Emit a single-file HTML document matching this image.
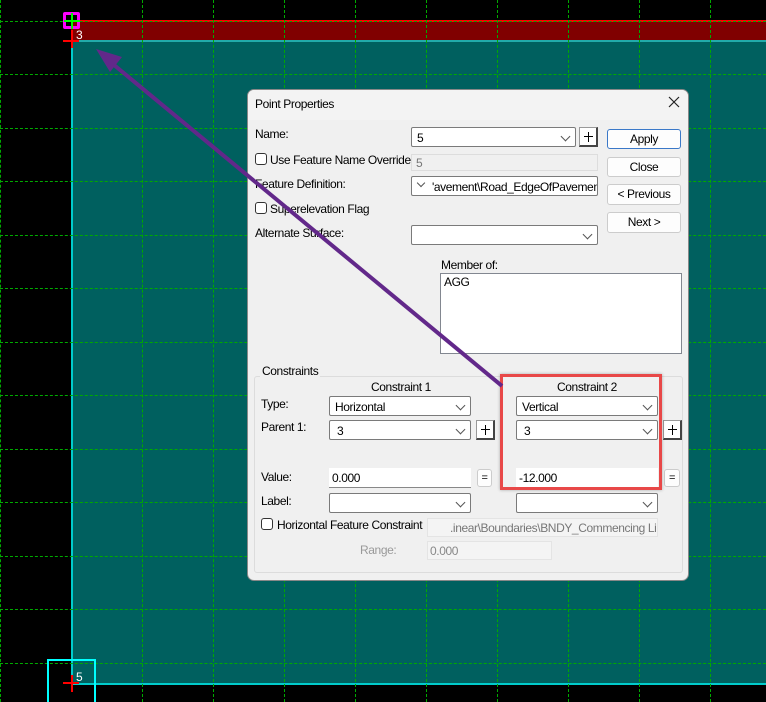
<!DOCTYPE html>
<html><head><style>
html,body{margin:0;width:766px;height:702px;overflow:hidden}
body{background:#000;position:relative;font-family:"Liberation Sans",sans-serif;font-size:12px;letter-spacing:-0.4px;color:#000}
.a{position:absolute;white-space:nowrap}
.vl{position:absolute;top:0;height:702px;width:0;border-left:1px dashed #0a0}
.hl{position:absolute;left:0;width:766px;height:0;border-top:1px dashed #0a0}
.cb{position:absolute;background:#fff;border:1px solid #7a7a7a;box-sizing:border-box;border-radius:2px;overflow:hidden;white-space:nowrap}
.cb .t{position:absolute;left:5px;top:3px}
.cb .v{position:absolute;right:6px;top:5px;width:6px;height:6px;border-right:1px solid #555;border-bottom:1px solid #555;transform:rotate(45deg)}
.btn{position:absolute;background:#fdfdfd;border:1px solid #ccc;border-radius:3px;box-sizing:border-box;text-align:center}
.pk{position:absolute;background:#fff;border:1px solid #999;border-right:2px solid #444;border-bottom:2px solid #444;box-sizing:border-box}
.pk:before{content:"";position:absolute;left:8px;top:4px;width:1px;height:10px;background:#000}
.pk:after{content:"";position:absolute;left:4px;top:8px;width:9px;height:1px;background:#000}
.chk{position:absolute;width:12px;height:12px;border:1px solid #333;border-radius:3px;box-sizing:border-box;background:#fff}
</style></head><body>
<div class="a" style="left:71px;top:20px;width:695px;height:20px;background:#800000;border-top:2px solid #f00;box-sizing:border-box"></div>
<div class="a" style="left:71px;top:40px;width:695px;height:645px;background:#00605f;border-left:2px solid #0cc;border-top:2px solid #2aa;border-bottom:2px solid #0cc;box-sizing:border-box"></div>
<div class="vl" style="left:0"></div><div class="vl" style="left:142px"></div><div class="vl" style="left:213px"></div><div class="vl" style="left:284px"></div><div class="vl" style="left:355px"></div><div class="vl" style="left:426px"></div><div class="vl" style="left:497px"></div><div class="vl" style="left:568px"></div><div class="vl" style="left:639px"></div><div class="vl" style="left:710px"></div>
<div class="hl" style="top:21px"></div><div class="hl" style="top:74px"></div><div class="hl" style="top:128px"></div><div class="hl" style="top:181px"></div><div class="hl" style="top:235px"></div><div class="hl" style="top:288px"></div><div class="hl" style="top:342px"></div><div class="hl" style="top:395px"></div><div class="hl" style="top:449px"></div><div class="hl" style="top:502px"></div><div class="hl" style="top:556px"></div><div class="hl" style="top:609px"></div><div class="hl" style="top:663px"></div>
<div class="a" style="left:63px;top:12px;width:17px;height:17px;border:3px solid #f0f;border-radius:2px;box-sizing:border-box"></div>
<div class="a" style="left:71px;top:13px;width:2px;height:16px;background:#0f0"></div>
<div class="a" style="left:64px;top:20px;width:16px;height:2px;background:#0f0"></div>
<div class="a" style="left:63px;top:40px;width:16px;height:2px;background:#f00"></div>
<div class="a" style="left:71px;top:30px;width:2px;height:18px;background:#f00"></div>
<div class="a" style="left:76px;top:28px;color:#fff;font-size:12px">3</div>
<div class="a" style="left:47px;top:659px;width:49px;height:50px;border:2px solid #0ff;box-sizing:border-box"></div>
<div class="a" style="left:63px;top:682px;width:16px;height:2px;background:#f00"></div>
<div class="a" style="left:71px;top:675px;width:2px;height:17px;background:#f00"></div>
<div class="a" style="left:76px;top:670px;color:#fff;font-size:12px">5</div>

<div class="a" style="left:247px;top:89px;width:442px;height:492px;background:#f0f0f0;border-radius:7px;border:1px solid #888;box-sizing:border-box;overflow:hidden">
<div class="a" style="left:0;top:0;width:442px;height:30px;background:#f3f3f3"></div>
</div>
<div class="a" style="left:255px;top:97px;font-size:12px">Point Properties</div>
<svg class="a" style="left:668px;top:96px" width="12" height="12"><path d="M1 1L11 11M11 1L1 11" stroke="#222" stroke-width="1.2"/></svg>

<div class="a" style="left:255px;top:127px">Name:</div>
<div class="cb" style="left:411px;top:127px;width:165px;height:20px"><span class="t">5</span><span class="v"></span></div>
<div class="pk" style="left:579px;top:127px;width:19px;height:20px"></div>
<div class="btn" style="left:607px;top:129px;width:74px;height:20px;border:1px solid #3a78c8;line-height:18px">Apply</div>
<div class="btn" style="left:607px;top:157px;width:74px;height:20px;line-height:18px">Close</div>
<div class="btn" style="left:607px;top:184px;width:74px;height:21px;line-height:19px">&lt; Previous</div>
<div class="btn" style="left:607px;top:212px;width:74px;height:21px;line-height:19px">Next &gt;</div>

<div class="chk" style="left:255px;top:153px"></div><div class="a" style="left:270px;top:153px">Use Feature Name Override:</div>
<div class="a" style="left:411px;top:154px;width:187px;height:17px;background:#f0f0f0;border:1px solid #ddd;box-sizing:border-box;color:#777;padding:1px 4px">5</div>
<div class="a" style="left:255px;top:177px">Feature Definition:</div>
<div class="cb" style="left:411px;top:176px;width:187px;height:20px"><span class="a" style="left:6px;top:3px;width:5px;height:5px;border-right:1px solid #555;border-bottom:1px solid #555;transform:rotate(45deg)"></span><span class="t" style="left:20px">'avement\Road_EdgeOfPavement</span></div>
<div class="chk" style="left:255px;top:202px"></div><div class="a" style="left:270px;top:202px">Superelevation Flag</div>
<div class="a" style="left:255px;top:226px">Alternate Surface:</div>
<div class="cb" style="left:411px;top:225px;width:187px;height:20px"><span class="v"></span></div>

<div class="a" style="left:441px;top:258px">Member of:</div>
<div class="a" style="left:440px;top:273px;width:242px;height:81px;background:#fff;border:1px solid #828790;box-sizing:border-box;padding:1px 3px">AGG</div>

<div class="a" style="left:254px;top:376px;width:429px;height:197px;border:1px solid #dcdcdc;border-radius:3px;box-sizing:border-box"></div>
<div class="a" style="left:260px;top:364px;background:#f0f0f0;padding:0 2px">Constraints</div>
<div class="a" style="left:371px;top:380px">Constraint 1</div>
<div class="a" style="left:557px;top:380px">Constraint 2</div>
<div class="a" style="left:261px;top:397px">Type:</div>
<div class="cb" style="left:329px;top:396px;width:142px;height:20px"><span class="t">Horizontal</span><span class="v"></span></div>
<div class="cb" style="left:516px;top:396px;width:142px;height:20px"><span class="t">Vertical</span><span class="v"></span></div>
<div class="a" style="left:261px;top:420px">Parent 1:</div>
<div class="cb" style="left:329px;top:420px;width:142px;height:20px"><span class="t" style="left:7px">3</span><span class="v"></span></div>
<div class="cb" style="left:516px;top:420px;width:142px;height:20px"><span class="t" style="left:7px">3</span><span class="v"></span></div>
<div class="pk" style="left:476px;top:420px;width:19px;height:20px"></div>
<div class="pk" style="left:663px;top:420px;width:19px;height:20px"></div>
<div class="a" style="left:261px;top:470px">Value:</div>
<div class="a" style="left:329px;top:468px;width:142px;height:20px;background:#fff;border-bottom:1px solid #888;box-sizing:border-box;padding:3px 3px">0.000</div>
<div class="a" style="left:516px;top:468px;width:142px;height:20px;background:#fff;border-bottom:1px solid #888;box-sizing:border-box;padding:3px 3px">-12.000</div>
<div class="btn" style="left:477px;top:469px;width:15px;height:18px;font-size:11px;line-height:16px">=</div>
<div class="btn" style="left:664px;top:469px;width:16px;height:18px;font-size:11px;line-height:16px">=</div>
<div class="a" style="left:261px;top:494px">Label:</div>
<div class="cb" style="left:329px;top:493px;width:142px;height:20px"><span class="v"></span></div>
<div class="cb" style="left:516px;top:493px;width:142px;height:20px"><span class="v"></span></div>
<div class="chk" style="left:261px;top:518px"></div><div class="a" style="left:277px;top:518px">Horizontal Feature Constraint</div>
<div class="a" style="left:427px;top:518px;width:231px;height:19px;background:#f4f4f4;border:1px solid #e4e4e4;box-sizing:border-box;color:#777;padding:2px 0 0 22px;overflow:hidden">.inear\Boundaries\BNDY_Commencing Line</div>
<div class="a" style="left:360px;top:543px;color:#999">Range:</div>
<div class="a" style="left:427px;top:541px;width:125px;height:19px;background:#f4f4f4;border:1px solid #e4e4e4;box-sizing:border-box;color:#888;padding:2px 2px">0.000</div>

<div class="a" style="left:500px;top:374px;width:162px;height:116px;border:3px solid #e84848;box-sizing:border-box;box-shadow:0 0 3px rgba(0,0,0,.3)"></div>

<svg class="a" style="left:0;top:0" width="766" height="702">
<line x1="502" y1="386" x2="108" y2="60" stroke="#62288a" stroke-width="4"/>
<polygon points="96,49 122,57 110,72" fill="#62288a"/>
</svg>
</body></html>
